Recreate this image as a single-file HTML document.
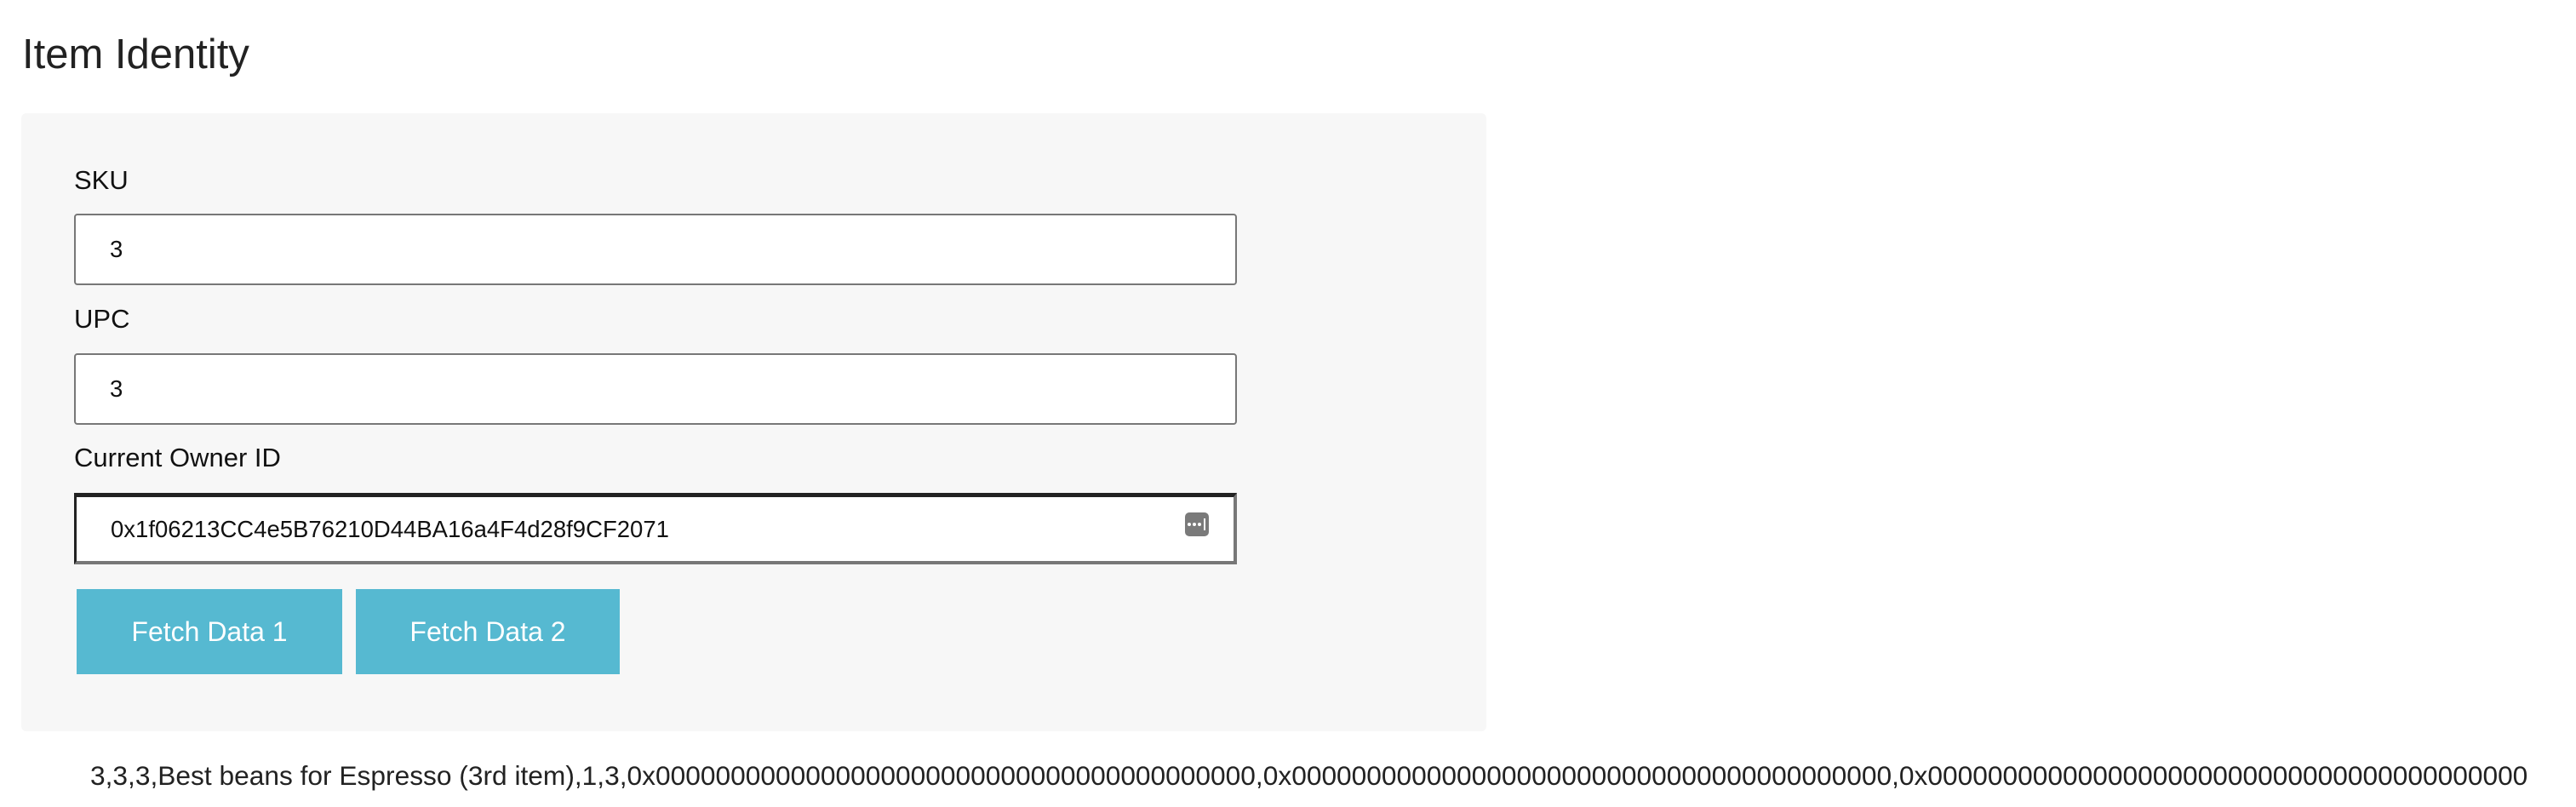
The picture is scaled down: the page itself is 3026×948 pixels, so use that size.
<!DOCTYPE html>
<html><head><meta charset="utf-8"><style>
*{box-sizing:border-box;margin:0;padding:0}
body{width:3026px;height:948px;background:#fff;font-family:"Liberation Sans",Arial,sans-serif;color:#222;position:relative;overflow:hidden}
.abs{position:absolute}
h1{position:absolute;left:26px;top:34px;font-size:49px;font-weight:normal;color:#222;line-height:60px}
.panel{left:25px;top:133px;width:1721px;height:726px;background:#f7f7f7;border-radius:6px}
.lbl{position:absolute;left:87px;font-size:31px;line-height:40px;color:#111}
.inp{position:absolute;left:87px;width:1366px;height:84px;background:#fff;border:2px solid #777;border-radius:4px;font-size:27.5px;line-height:80px;padding-left:40px;color:#111}
.inp3{border-top:5px solid #222;border-left:3px solid #222;border-right:4px solid #777;border-bottom:4px solid #777;border-radius:0;line-height:75px}
.btn{position:absolute;top:692px;height:100px;background:#56b9d1;color:#fff;font-size:32px;text-align:center;line-height:100px}
.out{position:absolute;left:106px;top:891px;font-size:31.7px;line-height:40px;white-space:nowrap;color:#222}
.ico{position:absolute;left:1392px;top:602px;width:28px;height:28px;background:#7a7a7a;border-radius:5px}
</style></head><body>
<h1>Item Identity</h1>
<div class="abs panel"></div>
<div class="lbl" style="top:192px">SKU</div>
<div class="inp" style="top:251px">3</div>
<div class="lbl" style="top:355px">UPC</div>
<div class="inp" style="top:415px">3</div>
<div class="lbl" style="top:518px">Current Owner ID</div>
<div class="inp inp3" style="top:579px">0x1f06213CC4e5B76210D44BA16a4F4d28f9CF2071</div>
<div class="ico"><svg width="28" height="28" viewBox="0 0 28 28"><circle cx="5" cy="14" r="2" fill="#fff"/><circle cx="11" cy="14" r="2" fill="#fff"/><circle cx="17" cy="14" r="2" fill="#fff"/><rect x="22" y="7" width="2" height="14" fill="#fff"/></svg></div>
<div class="btn" style="left:90px;width:312px">Fetch Data 1</div>
<div class="btn" style="left:418px;width:310px">Fetch Data 2</div>
<div class="out">3,3,3,Best beans for Espresso (3rd item),1,3,0x0000000000000000000000000000000000000000,0x0000000000000000000000000000000000000000,0x0000000000000000000000000000000000000000</div>
</body></html>
